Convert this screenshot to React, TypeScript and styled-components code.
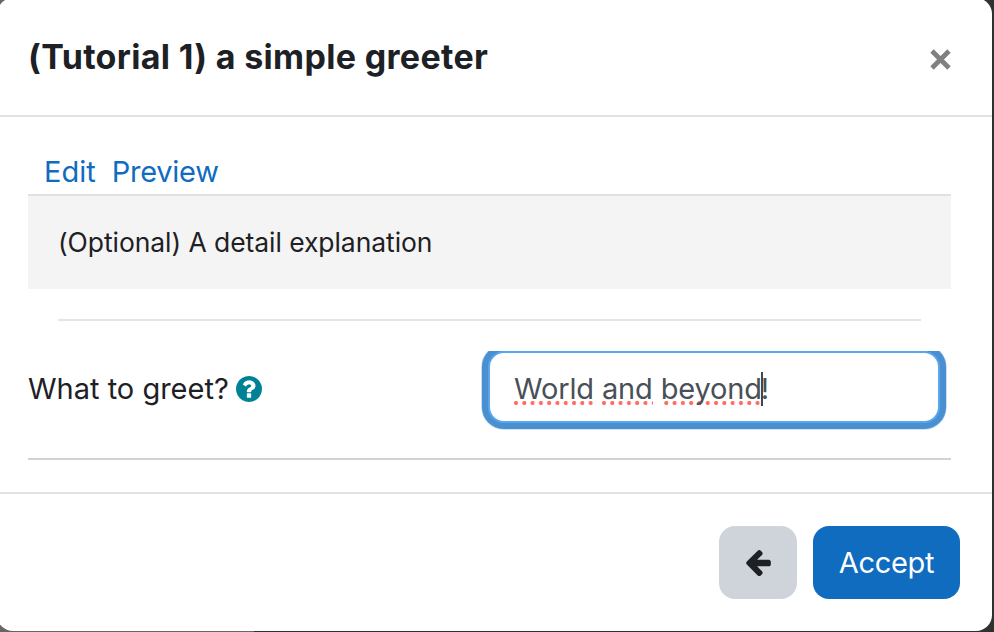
import React from 'react';
import styled, { createGlobalStyle } from 'styled-components';

const GlobalStyle = createGlobalStyle`
  * { box-sizing: border-box; }
  html, body, #root { height: 100%; }
  body {
    margin: 0;
    overflow: hidden;
    background: linear-gradient(90deg, #666 0 254px, #303132 254px);
    font-family: Inter, "Liberation Sans", sans-serif;
    color: #1d2125;
  }
`;

const Modal = styled.main`
  display: flex;
  flex-direction: column;
  width: 995px;
  height: 633px;
  margin: -2px 0 0 -3px;
  padding-left: 3px;
  background: #fff;
  border-radius: 16px;
`;

const Header = styled.header`
  display: flex;
  flex: 0 0 119px;
  align-items: center;
  justify-content: space-between;
  padding: 0 41px 0 28px;
  border-bottom: 2px solid #dee2e6;
`;

const Title = styled.h1`
  margin: 0;
  font-size: 34px;
  line-height: 44px;
  font-weight: 700;
  letter-spacing: 0.32px;
  white-space: nowrap;
`;

const CloseButton = styled.button`
  display: flex;
  margin-top: 6px;
  padding: 0;
  border: 0;
  background: none;
  color: #808080;
`;

const Body = styled.section`
  display: flex;
  flex-direction: column;
  flex: 0 0 375px;
  padding: 37px 41px 0 28px;
`;

const Tabs = styled.nav`
  display: flex;
  gap: 16px;
  height: 42px;
  padding: 0 16px;
  border-bottom: 2px solid #dee2e6;
`;

const Tab = styled.a<{ $tracking: string }>`
  color: #0f6cbf;
  font-size: 29px;
  line-height: 35px;
  letter-spacing: ${(p) => p.$tracking};
  text-decoration: none;
`;

const Explanation = styled.div`
  height: 93px;
  padding: 0 30px;
  background: #f4f4f4;
  font-size: 26.5px;
  line-height: 92px;
  letter-spacing: -0.07px;
`;

const Divider = styled.hr`
  width: auto;
  height: 2px;
  margin: 30px 30px 0;
  border: 0;
  background: #e5e5e5;
`;

const Field = styled.div`
  display: flex;
  justify-content: space-between;
  height: 109px;
  margin-top: 30px;
  overflow: hidden;
  border-bottom: 2px solid #d2d2d2;
`;

const Label = styled.label`
  display: flex;
  align-items: center;
  gap: 7px;
  height: 75px;
  font-size: 29px;
  letter-spacing: 0;
  white-space: nowrap;
`;

const TextBox = styled.div`
  display: flex;
  align-items: center;
  width: 452px;
  height: 72px;
  margin-right: 11px;
  padding: 3px 0 0 24px;
  border: 2px solid #58a7ee;
  border-radius: 16px;
  background: #fff;
  box-shadow: 0 0 0 6px #4a90d1, 0 0 0 6.6px #a5c7e8;
  color: #495057;
  font-size: 29px;
  white-space: pre;
`;

const Word = styled.span<{ $offset?: string }>`
  height: 34px;
  line-height: 34px;
  letter-spacing: -0.15px;
  background: radial-gradient(circle at 2px 2px, #ff6c61 1.8px, transparent 2.3px)
    ${(p) => p.$offset ?? '0'} 29px / 8.3px 4px repeat-x;
`;

const Space = styled.span`
  width: 8px;
`;

const Caret = styled.span`
  width: 2px;
  height: 34px;
  margin: 0 -2px 0 -1px;
  background: #3f474f;
`;

const Footer = styled.footer`
  display: flex;
  justify-content: flex-end;
  gap: 16px;
  padding: 32px 32px 0;
  border-top: 2px solid #dee2e6;
`;

const Button = styled.button<{ $primary?: boolean }>`
  display: flex;
  align-items: center;
  justify-content: center;
  width: ${(p) => (p.$primary ? 147 : 78)}px;
  height: 73px;
  padding: ${(p) => (p.$primary ? '0' : '0 0 1px')};
  border: 0;
  border-radius: 16px;
  background: ${(p) => (p.$primary ? '#0f6cbf' : '#ced4da')};
  color: ${(p) => (p.$primary ? '#fff' : '#1d2125')};
  font: 400 29px Inter, sans-serif;
  letter-spacing: -0.3px;
`;

const CloseIcon = () => (
  <svg width="21" height="21" viewBox="0 0 21 21" fill="none" stroke="currentColor" strokeWidth="4.8">
    <path d="M2 2l17 17M19 2L2 19" />
  </svg>
);

const HelpIcon = () => (
  <svg width="26" height="26" viewBox="128 128 1536 1536" fill="#008196">
    <circle cx="896" cy="896" r="720" fill="#fff" />
    <path d="M1024 1376v-192q0-14-9-23t-23-9h-192q-14 0-23 9t-9 23v192q0 14 9 23t23 9h192q14 0 23-9t9-23zm256-672q0-88-55.5-163t-138.5-116-170-41q-243 0-371 213-15 24 8 42l132 100q7 6 19 6 16 0 25-12 53-68 86-92 34-24 86-24 48 0 85.5 26t37.5 59q0 38-20 61t-68 45q-63 28-115.5 86.5t-52.5 125.5v36q0 14 9 23t23 9h192q14 0 23-9t9-23q0-19 21.5-49.5t54.5-49.5q32-18 49-28.5t46-35 44.5-48 28-60.5 12.5-81zm384 192q0 209-103 385.5t-279.5 279.5-385.5 103-385.5-103-279.5-279.5-103-385.5 103-385.5 279.5-279.5 385.5-103 385.5 103 279.5 279.5 103 385.5z" />
  </svg>
);

const ArrowIcon = () => (
  <svg width="30" height="30" viewBox="0 0 1792 1792" fill="currentColor">
    <path d="M1664 896v128q0 53-32.5 90.5t-84.5 37.5h-704l293 294q38 36 38 90t-38 90l-75 76q-37 37-90 37-52 0-91-37l-651-652q-37-37-37-90 0-52 37-91l651-650q38-38 91-38 52 0 90 38l75 74q38 38 38 91t-38 91l-293 293h704q52 0 84.5 37.5t32.5 90.5z" />
  </svg>
);

export default function App() {
  return (
    <>
      <GlobalStyle />
      <Modal>
        <Header>
          <Title>(Tutorial 1) a simple greeter</Title>
          <CloseButton aria-label="Close"><CloseIcon /></CloseButton>
        </Header>
        <Body>
          <Tabs>
            <Tab $tracking="0px">Edit</Tab>
            <Tab $tracking="-0.25px">Preview</Tab>
          </Tabs>
          <Explanation>(Optional) A detail explanation</Explanation>
          <Divider />
          <Field>
            <Label>What to greet?<HelpIcon /></Label>
            <TextBox role="textbox">
              <Word>World</Word>
              <Space> </Space>
              <Word>and</Word>
              <Space> </Space>
              <Word $offset="-5px">beyond</Word>
              <Caret />
              <span>!</span>
            </TextBox>
          </Field>
        </Body>
        <Footer>
          <Button aria-label="Back"><ArrowIcon /></Button>
          <Button $primary>Accept</Button>
        </Footer>
      </Modal>
    </>
  );
}
